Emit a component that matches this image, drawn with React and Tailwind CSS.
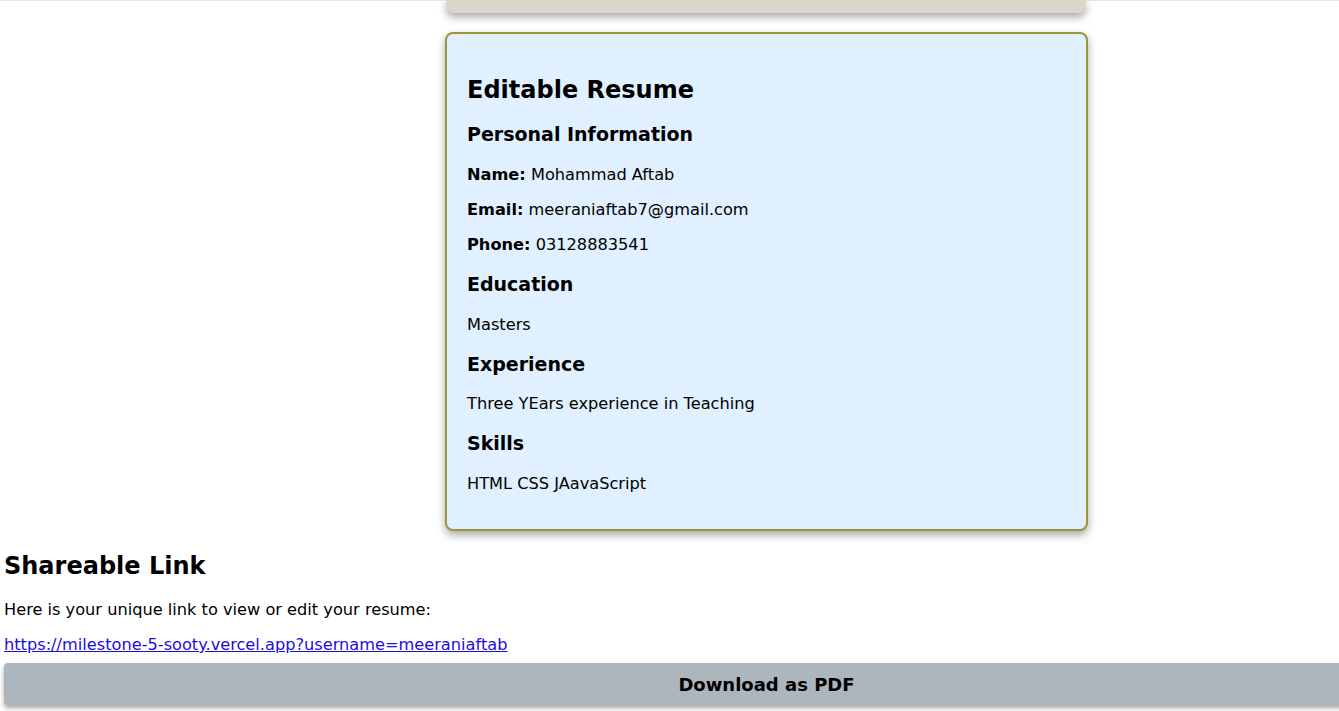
export default function App() {
  const font = { fontFamily: '"DejaVu Sans", Verdana, sans-serif' };
  return (
    <div className="w-[1339px] h-[711px] overflow-hidden bg-white text-black" style={font}>
      <div className="w-[1533px] border-t border-[#e6e6e6] flow-root">
        <div className="mx-auto w-[640px] h-[13px] -mt-px bg-[#d9d7cc] rounded-b-[8px] shadow-[0_4px_8px_rgba(0,0,0,0.35)]" style={{ transform: 'translateX(-1px)' }} />
        <div className="mx-auto mt-[19px] w-[643px] border-2 border-[#a0943a] rounded-[8px] bg-[#e1f0fe] px-[20px] pt-[42px] pb-[36px] shadow-[0_4px_8px_rgba(0,0,0,0.35)] flow-root">
          <h2 className="text-[24px] leading-[28px] font-bold">Editable Resume</h2>
          <h3 className="mt-[19px] text-[19px] leading-[22px] font-bold">Personal Information</h3>
          <p className="mt-[20px] text-[16.2px] leading-[19px]"><b>Name:</b> Mohammad Aftab</p>
          <p className="mt-[16px] text-[16.2px] leading-[19px]"><b>Email:</b> meeraniaftab7@gmail.com</p>
          <p className="mt-[16px] text-[16.2px] leading-[19px]"><b>Phone:</b> 03128883541</p>
          <h3 className="mt-[19px] text-[19px] leading-[22px] font-bold">Education</h3>
          <p className="mt-[20px] text-[16.2px] leading-[19px]">Masters</p>
          <h3 className="mt-[19px] text-[19px] leading-[22px] font-bold">Experience</h3>
          <p className="mt-[19px] text-[16.2px] leading-[19px]">Three YEars experience in Teaching</p>
          <h3 className="mt-[19px] text-[19px] leading-[22px] font-bold">Skills</h3>
          <p className="mt-[20px] text-[16.2px] leading-[19px]">HTML CSS JAavaScript</p>
        </div>
        <div className="px-[4px]">
          <h2 className="mt-[21px] text-[24px] leading-[28px] font-bold">Shareable Link</h2>
          <p className="mt-[20px] text-[16.2px] leading-[19px]">Here is your unique link to view or edit your resume:</p>
          <p className="mt-[16px] text-[16.2px] leading-[19px]">
            <a href="#" className="text-[#1a0ddd] underline">https://milestone-5-sooty.vercel.app?username=meeraniaftab</a>
          </p>
          <button className="mt-[9px] w-[1525px] h-[42px] bg-[#adb5bd] rounded-[4px] text-[18px] font-bold shadow-[0_3px_5px_rgba(0,0,0,0.35)]">Download as PDF</button>
        </div>
      </div>
    </div>
  );
}
